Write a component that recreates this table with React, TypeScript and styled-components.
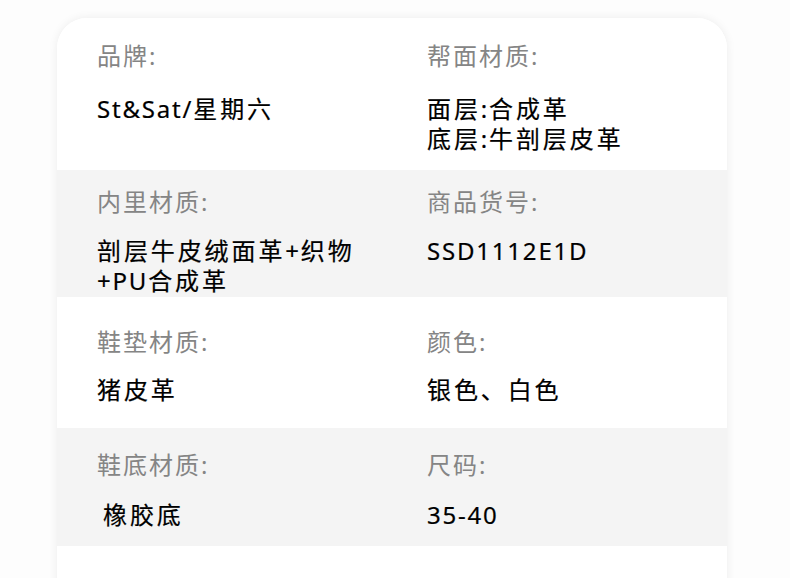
import React from "react";
import styled, { createGlobalStyle } from "styled-components";

const Global = createGlobalStyle`
  html, body { margin: 0; padding: 0; background: #ffffff; }
  body { font-family: "Noto Sans", "Noto Sans CJK SC", sans-serif; overflow: hidden; }
`;

const Page = styled.div`
  width: 790px;
  height: 578px;
  padding: 18px 63px 0 57px;
  box-sizing: border-box;
  overflow: hidden;
  background: #fdfdfd;
`;

const Card = styled.div`
  width: 670px;
  height: 600px;
  background: #ffffff;
  border-radius: 30px 30px 0 0;
  box-shadow: 0 0 10px rgba(0, 0, 0, 0.07);
  overflow: hidden;
  display: flex;
  flex-direction: column;
`;

const Row = styled.div<{ $h: number; $pad: number; $gray?: boolean }>`
  height: ${(p) => p.$h}px;
  box-sizing: border-box;
  padding: ${(p) => p.$pad}px 0 0 40px;
  background: ${(p) => (p.$gray ? "#f4f4f4" : "#ffffff")};
  display: grid;
  grid-template-columns: 330px 1fr;
`;

const Cell = styled.div<{ $gap: number }>`
  display: flex;
  flex-direction: column;
  gap: ${(p) => p.$gap}px;
`;

const Label = styled.div`
  font-size: 24px;
  line-height: 28px;
  color: #858585;
  font-weight: 400;
  letter-spacing: 2px;
`;

const Value = styled.div<{ $indent?: number }>`
  font-size: 24px;
  line-height: 30px;
  color: #000000;
  font-weight: 400;
  letter-spacing: 1.8px;
  padding-left: ${(p) => p.$indent ?? 0}px;
  white-space: pre-line;
  -webkit-text-stroke: 0.2px #000;
`;

const Han = styled.span`
  letter-spacing: 2.9px;
`;

function renderValue(text: string) {
  const parts = text.split(/([\u3000-\u303f\u4e00-\u9fff]+)/);
  return parts.map((p, i) =>
    /[\u3000-\u303f\u4e00-\u9fff]/.test(p) ? <Han key={i}>{p}</Han> : <React.Fragment key={i}>{p}</React.Fragment>
  );
}

type Item = { label: string; value: string; indent?: number };
type RowData = { h: number; pad: number; gap: number; gray?: boolean; items: Item[] };

const rows: RowData[] = [
  {
    h: 152, pad: 24, gap: 24,
    items: [
      { label: "品牌:", value: "St&Sat/星期六" },
      { label: "帮面材质:", value: "面层:合成革\n底层:牛剖层皮革" },
    ],
  },
  {
    h: 127, pad: 18, gap: 20, gray: true,
    items: [
      { label: "内里材质:", value: "剖层牛皮绒面革+织物\n+PU合成革" },
      { label: "商品货号:", value: "SSD1112E1D" },
    ],
  },
  {
    h: 131, pad: 31, gap: 19,
    items: [
      { label: "鞋垫材质:", value: "猪皮革" },
      { label: "颜色:", value: "银色、白色" },
    ],
  },
  {
    h: 118, pad: 23, gap: 21, gray: true,
    items: [
      { label: "鞋底材质:", value: "橡胶底", indent: 6 },
      { label: "尺码:", value: "35-40" },
    ],
  },
];

export default function App() {
  return (
    <>
      <Global />
      <Page>
        <Card>
          {rows.map((r, i) => (
            <Row key={i} $h={r.h} $pad={r.pad} $gray={r.gray}>
              {r.items.map((it, j) => (
                <Cell key={j} $gap={r.gap}>
                  <Label>{it.label}</Label>
                  <Value $indent={it.indent}>{renderValue(it.value)}</Value>
                </Cell>
              ))}
            </Row>
          ))}
        </Card>
      </Page>
    </>
  );
}
